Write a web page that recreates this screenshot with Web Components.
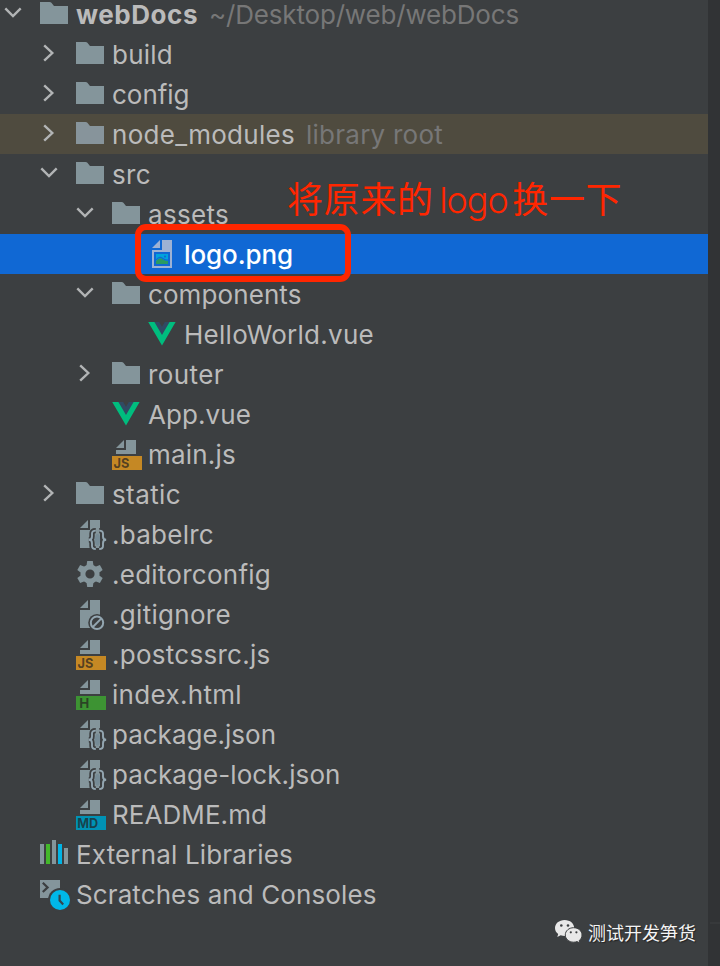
<!DOCTYPE html>
<html lang="zh-CN">
<head>
<meta charset="utf-8">
<title>webDocs</title>
<style>
    body {
        margin: 0;
        background: #3c3f41;
        font-family: Inter, "Noto Sans CJK SC", sans-serif;
    }
</style>
</head>
<body>
<project-panel>
    <tree-row icon="folder" arrow="down" name="webDocs" span="122" hint="~/Desktop/web/webDocs" hint-span="310" bold></tree-row>
    <tree-row level="1" icon="folder" arrow="right" name="build" span="61"></tree-row>
    <tree-row level="1" icon="folder" arrow="right" name="config" span="77.5"></tree-row>
    <tree-row level="1" icon="folder" arrow="right" name="node_modules" span="183" hint="library root" hint-span="137" library></tree-row>
    <tree-row level="1" icon="folder" arrow="down" name="src" span="39"></tree-row>
    <tree-row level="2" icon="folder" arrow="down" name="assets" span="81"></tree-row>
    <tree-row level="3" icon="image" name="logo.png" span="109" selected></tree-row>
    <tree-row level="2" icon="folder" arrow="down" name="components" span="153.5"></tree-row>
    <tree-row level="3" icon="vue" name="HelloWorld.vue" span="190"></tree-row>
    <tree-row level="2" icon="folder" arrow="right" name="router" span="76"></tree-row>
    <tree-row level="2" icon="vue" name="App.vue" span="103"></tree-row>
    <tree-row level="2" icon="js" name="main.js" span="88"></tree-row>
    <tree-row level="1" icon="folder" arrow="right" name="static" span="69"></tree-row>
    <tree-row level="1" icon="json" name=".babelrc" span="102"></tree-row>
    <tree-row level="1" icon="gear" name=".editorconfig" span="159"></tree-row>
    <tree-row level="1" icon="ignored" name=".gitignore" span="119"></tree-row>
    <tree-row level="1" icon="js" name=".postcssrc.js" span="158.5"></tree-row>
    <tree-row level="1" icon="html" name="index.html" span="130"></tree-row>
    <tree-row level="1" icon="json" name="package.json" span="164"></tree-row>
    <tree-row level="1" icon="json" name="package-lock.json" span="228.5"></tree-row>
    <tree-row level="1" icon="md" name="README.md" span="155"></tree-row>
    <tree-row icon="libraries" name="External Libraries" span="217"></tree-row>
    <tree-row icon="scratches" name="Scratches and Consoles" span="300.5"></tree-row>
    <red-note slot="overlay"></red-note>
    <account-mark slot="overlay">测试开发笋货</account-mark>
</project-panel>

<script>
// File shapes shared by several icons, on a 16 unit grid
const page = `<path d="M7 1 3 5h4zM8 1v5H3v9h10V1z" fill="#84959b"/>`;
const tab = (fill, text, x, width) => `
    <path d="M7 1 3 5h4zM8 1v5H3v2h10V1z" fill="#84959b"/>
    <path d="M1 9h15v7H1z" fill="${fill}"/>
    <text x="${x}" y="15" font-size="6.8" font-weight="700" textLength="${width}" lengthAdjust="spacingAndGlyphs" fill="#231f20" fill-opacity=".7">${text}</text>`;
const braces = `M10.900 6.300q-1.900 0-1.900 1.500v1.400q0 1.700-1.600 1.700 1.600 0 1.600 1.700v1.400q0 1.500 1.900 1.500M12.600 6.300q1.900 0 1.900 1.500v1.400q0 1.700 1.600 1.700-1.600 0-1.600 1.700v1.400q0 1.500-1.900 1.500`;

const icons = {
    folder: `<path d="M1 13h14V4H8L6.7 2.4Q6.4 2 5.8 2H1z" fill="var(--folder, #84959b)"/>`,
    image: `
        <path d="M7 1 3 5h4zM8 1v5H3v9h10V1z" fill="#9db2d4"/>
        <path d="M4 7h8v7H4z" fill="#1068d4"/>
        <path d="M5 8h6v5H5z" fill="#00a4dc"/>
        <path d="M5 11.5Q7 9.1 8.6 10.8 9.8 11.6 11 11.5V13H5z" fill="#299b63"/>
        <path d="M5 11.1Q7 8.7 8.6 10.4 9.8 11.2 11 11.1" fill="none" stroke="#1068d4" stroke-width=".6"/>
        <circle cx="9.5" cy="9.3" r=".55" fill="#1068d4"/>`,
    vue: `
        <path d="M1.1 2h4L8 7.1 10.9 2h3.9L8 13.8z" fill="#00bd7e"/>
        <path d="M4.2 2h2.4L8 4.4 9.4 2h2.4L8 8.5z" fill="#304a63"/>`,
    js: tab("#c58824", "JS", 1.8, 7.9),
    html: tab("#3d9333", "H", 2.6, 5),
    md: tab("#0092b5", "MD", 1.6, 10.5),
    json: `
        ${page}
        <path d="${braces}" fill="none" stroke="#3c3f41" stroke-width="2.7"/>
        <path d="${braces}" fill="none" stroke="#93a6b1" stroke-width=".95"/>
        <ellipse cx="11.75" cy="10.9" rx="1.3" ry="3" fill="#768b96"/>`,
    gear: `
        <g fill="#84959b">
            <path id="tooth" d="M6.6 1.5h2.8l.4 2.7H6.2z"/>
            <use href="#tooth" transform="rotate(60 8 8)"/>
            <use href="#tooth" transform="rotate(120 8 8)"/>
            <use href="#tooth" transform="rotate(180 8 8)"/>
            <use href="#tooth" transform="rotate(240 8 8)"/>
            <use href="#tooth" transform="rotate(300 8 8)"/>
        </g>
        <circle cx="8" cy="8" r="3.55" fill="none" stroke="#84959b" stroke-width="2.5"/>`,
    ignored: `
        ${page}
        <circle cx="11.5" cy="12.4" r="4.4" fill="#3c3f41"/>
        <g fill="none" stroke="#93a6b1" stroke-width="1">
            <circle cx="11.5" cy="12.4" r="3.1"/>
            <path d="M9.3 14.6l4.4-4.4"/>
        </g>`,
    libraries: `
        <path d="M1 3h2v10H1zM7 1h2v12H7zM13 5h2v8h-2z" fill="#84959b"/>
        <path d="M4 3h2v10H4z" fill="#43b82a"/>
        <path d="M10 3h2v10h-2z" fill="#00b4e6"/>`,
    scratches: `
        <path d="M1 1h10v9H1z" fill="#84959b"/>
        <path d="M2.4 2.4 4.8 4.7 2.4 7" fill="none" stroke="#3c3f41" stroke-width="1.1"/>
        <circle cx="11" cy="11" r="6" fill="#3c3f41"/>
        <circle cx="11" cy="11" r="5" fill="#00b8e8"/>
        <path d="M10.8 8.4v2.9l1.8 1.9" fill="none" stroke="#33464e" stroke-width="1.1"/>`
};

const arrows = {
    down: `<path d="M5.3 10.4 13 18 20.7 10.4"/>`,
    right: `<path d="M8.2 7.3 16.3 15 8.2 22.7"/>`
};

class TreeRow extends HTMLElement {

    connectedCallback() {
        const arrow = this.getAttribute("arrow");
        const hint = this.getAttribute("hint");

        this.attachShadow({ mode: "open" }).innerHTML = `
            <style>
                :host {
                    display: flex;
                    flex: none;
                    align-items: center;
                    height: 40px;
                    padding-left: calc(var(--level) * 36px);
                    color: #bbb;
                    font-size: 26px;
                    line-height: 26px;
                    white-space: pre;
                }

                :host([library]) {
                    background: #4f4b3f;
                    --folder: #87949b;
                }

                :host([selected]) {
                    background: #1068d4;
                    color: #fff;
                    font-weight: 500;
                }

                :host([bold]) .name {
                    font-weight: 700;
                }

                svg {
                    flex: none;
                    height: 32px;
                }

                span {
                    padding-top: 2px;
                }

                .arrow {
                    width: 26px;
                    margin-right: 12px;
                    fill: none;
                    stroke: #b2b4b5;
                    stroke-width: 2.4;
                }

                .icon {
                    width: 32px;
                    margin-right: 6px;
                    overflow: visible;
                }

                .hint {
                    margin-left: 11px;
                    color: #777;
                }
            </style>
            <svg class="arrow" viewBox="0 0 26 32">${arrows[arrow] ?? ""}</svg>
            <svg class="icon" viewBox="0 0 16 16">${icons[this.getAttribute("icon")]}</svg>
            <span class="name">${this.getAttribute("name")}</span>
            ${hint ? `<span class="hint">${hint}</span>` : ""}
        `;

        this.style.setProperty("--level", this.getAttribute("level") ?? 0);
        this.track(".name", this.getAttribute("span"));
        if (hint) {
            this.track(".hint", this.getAttribute("hint-span"));
        }
    }

    // spread the letters so that the text takes the given width
    track(selector, span) {
        const el = this.shadowRoot.querySelector(selector);
        const extra = Number(span) - el.getBoundingClientRect().width;
        el.style.letterSpacing = `${extra / el.textContent.length}px`;
    }
}

class RedNote extends HTMLElement {

    connectedCallback() {
        this.attachShadow({ mode: "open" }).innerHTML = `
            <style>
                :host {
                    display: block;
                    color: #ff2600;
                }

                .frame {
                    position: absolute;
                    left: 135px;
                    top: 224px;
                    width: 216px;
                    height: 58px;
                    box-sizing: border-box;
                    border: 6px solid #ff2600;
                    border-radius: 11px;
                }

                .text {
                    position: absolute;
                    left: 287px;
                    top: 171px;
                    display: flex;
                    align-items: baseline;
                    font: 36px/52px "Noto Sans CJK SC", sans-serif;
                    letter-spacing: 0.7px;
                    white-space: nowrap;
                }

                .latin {
                    margin: 0 4.5px 0 5.5px;
                    font-family: Inter, sans-serif;
                    font-weight: 360;
                    letter-spacing: -1.1px;
                }
            </style>
            <div class="frame"></div>
            <div class="text"><span>将原来的</span><span class="latin">logo</span><span>换一下</span></div>
        `;
    }
}

class AccountMark extends HTMLElement {

    connectedCallback() {
        this.attachShadow({ mode: "open" }).innerHTML = `
            <style>
                :host {
                    position: absolute;
                    left: 554px;
                    top: 917px;
                    display: flex;
                    align-items: center;
                    gap: 5px;
                    height: 30px;
                    color: #f4f4f4;
                    font: 18px/30px "Noto Sans CJK SC", sans-serif;
                    text-shadow: 1px 1px 1px #222;
                }

                svg {
                    width: 29px;
                    height: 28px;
                }
            </style>
            <svg viewBox="0 0 29 28">
                <path d="M10.6 2C5 2 1 5.6 1 10.1c0 2.5 1.2 4.5 3.2 6L3.3 19l3.4-1.7q2 .6 4.2.6c5.4 0 9.3-3.5 9.3-7.9S16.1 2 10.6 2z" fill="#e8e8e8"/>
                <path d="M19.6 9.7c-4.7 0-8.3 3.2-8.3 7.2s3.6 7.3 8.3 7.3q1.8 0 3.4-.6l2.9 1.5-.8-2.4c1.8-1.4 2.9-3.4 2.9-5.7 0-4.1-3.7-7.3-8.4-7.3z" fill="#e8e8e8" stroke="#3c3f41" stroke-width="1"/>
                <g fill="#3c3f41">
                    <circle cx="7.3" cy="7.5" r="1.3"/><circle cx="14" cy="7.5" r="1.3"/>
                    <circle cx="16.8" cy="14.3" r="1.1"/><circle cx="22.4" cy="14.3" r="1.1"/>
                </g>
            </svg>
            <slot></slot>
        `;
    }
}

class ProjectPanel extends HTMLElement {

    constructor() {
        super();
        this.attachShadow({ mode: "open" }).innerHTML = `
            <style>
                :host {
                    position: relative;
                    display: flex;
                    width: 720px;
                    height: 966px;
                    overflow: hidden;
                }

                .tree {
                    display: flex;
                    flex: 1;
                    flex-direction: column;
                    margin-top: -6px;
                }

                .gutter {
                    display: flex;
                    flex-direction: column;
                    justify-content: flex-end;
                    width: 12px;
                    background: #313335;
                }

                .gutter div {
                    height: 2px;
                    margin: 0 0 42px 2px;
                    background: #37393b;
                }
            </style>
            <div class="tree"><slot></slot></div>
            <div class="gutter"><div></div></div>
            <slot name="overlay"></slot>
        `;
    }
}

customElements.define("project-panel", ProjectPanel);
customElements.define("tree-row", TreeRow);
customElements.define("red-note", RedNote);
customElements.define("account-mark", AccountMark);
</script>
</body>
</html>
